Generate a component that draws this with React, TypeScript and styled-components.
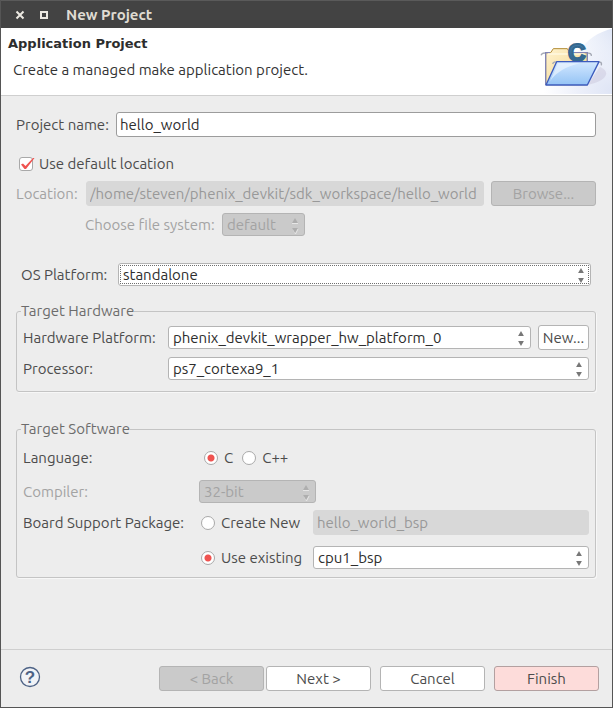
import React, { useId, useState } from "react";
import styled, { createGlobalStyle, css } from "styled-components";

const GlobalStyle = createGlobalStyle`
  *, *::before, *::after { box-sizing: border-box; }
  body {
    margin: 0;
    background: #ededed;
    color: #4c4c4c;
    font: 15px/20px Ubuntu, "Noto Sans", sans-serif;
  }
  button, input, select { font: inherit; color: inherit; margin: 0; }
`;

const ui = {
  line: "#b4b4b4",
  disabledFill: "#cacaca",
  disabledText: "#a3a3a3",
  accent: "#ef5350",
};

const Window = styled.main`
  display: flex;
  flex-direction: column;
  min-height: 100vh;
  border: 1px solid #555555;
  border-top: 0;
`;

const TitleBar = styled.header`
  display: flex;
  align-items: center;
  gap: 8px;
  height: 28px;
  padding: 0 11px;
  background: #434343;
  border-top: 1px solid #5a5a5a;
  color: #dfdbd2;
`;

const WindowButton = styled.button`
  display: flex;
  align-items: center;
  justify-content: center;
  width: 16px;
  height: 16px;
  padding: 0;
  border: 0;
  background: none;
`;

const WindowTitle = styled.h1`
  margin: 0 0 0 6px;
  font-size: 15px;
  line-height: 20px;
  font-weight: 700;
`;

const Banner = styled.section`
  display: flex;
  justify-content: space-between;
  height: 68px;
  background: #ffffff;
  border-bottom: 1px solid #cfcfcf;
`;

const BannerText = styled.div`
  padding: 6px 0 0 7px;
`;

const BannerTitle = styled.h2`
  margin: 0;
  color: #2d2d2d;
  font: 700 13px/20px "DejaVu Sans", sans-serif;
`;

const BannerNote = styled.p`
  margin: 6px 0 0 5px;
  color: #333333;
`;

const Body = styled.form`
  display: flex;
  flex: 1;
  flex-direction: column;
  padding: 16px 16px 16px 15px;
`;

const Row = styled.div<{ $top?: number; $indent?: number; $inset?: number }>`
  display: flex;
  align-items: center;
  gap: 7px;
  margin-top: ${(p) => p.$top ?? 0}px;
  padding-left: ${(p) => p.$indent ?? 0}px;
  padding-right: ${(p) => p.$inset ?? 0}px;
`;

const ChoiceGroup = styled.div`
  display: flex;
  gap: 9px;
`;

const Label = styled.label<{ $width?: number; $disabled?: boolean }>`
  flex: none;
  width: ${(p) => (p.$width ? `${p.$width}px` : "auto")};
  white-space: nowrap;
  color: ${(p) => (p.$disabled ? ui.disabledText : "inherit")};
`;

const TextBox = styled.input`
  flex: 1;
  min-width: 0;
  height: 25px;
  padding: 0 3px;
  border: 1px solid #9c9c9c;
  border-radius: 3px;
  outline: 0;
  background: #ffffff;
  color: #2d2d2d;
  &:disabled {
    border-color: #d8d8d8;
    background: #d8d8d8;
    color: #999999;
  }
`;

const PushButton = styled.button<{ $width: number; $primary?: boolean }>`
  flex: none;
  width: ${(p) => p.$width}px;
  height: 25px;
  padding: 0;
  border: 1px solid ${(p) => (p.$primary ? "#b3a0a0" : ui.line)};
  border-radius: 3px;
  background: ${(p) => (p.$primary ? "#fddcda" : "#ffffff")};
  line-height: 20px;
  &:disabled {
    background: ${ui.disabledFill};
    color: ${ui.disabledText};
  }
`;

const SelectFrame = styled.span<{ $width?: number; $focused?: boolean }>`
  position: relative;
  display: flex;
  ${(p) => (p.$width ? css`flex: none; width: ${p.$width}px;` : css`flex: 1; min-width: 0;`)}
  height: 23px;
  border: 1px solid ${ui.line};
  border-radius: 3px;
  background: #ffffff;
  color: #2d2d2d;
  &:has(select:disabled) {
    background: ${ui.disabledFill};
    color: ${ui.disabledText};
  }
  select {
    width: 100%;
    height: ${(p) => (p.$focused ? 19 : 21)}px;
    margin: ${(p) => (p.$focused ? 1 : 0)}px;
    padding: 0 20px 0 ${(p) => (p.$focused ? 2 : 4)}px;
    border: ${(p) => (p.$focused ? "1px dotted #6e6e6e" : "0")};
    outline: 0;
    appearance: none;
    background: none;
    line-height: 17px;
    opacity: 1;
  }
  svg {
    position: absolute;
    top: 3px;
    right: 5px;
    pointer-events: none;
  }
`;

const Group = styled.fieldset<{ $top: number; $pad: string }>`
  min-width: 0;
  margin: ${(p) => p.$top}px 0 0;
  padding: ${(p) => p.$pad};
  border: 1px solid #c4c4c4;
  border-radius: 3px;
  box-shadow: 1px 1px 0 #f7f7f7;
`;

const Legend = styled.legend`
  margin-left: -2px;
  padding: 0;
  color: #6c6c6c;
`;

const Choice = styled.label<{ $width?: number }>`
  display: flex;
  flex: none;
  align-items: center;
  gap: 6px;
  width: ${(p) => (p.$width ? `${p.$width}px` : "auto")};
  white-space: nowrap;
`;

const Radio = styled.input`
  flex: none;
  width: 14px;
  height: 14px;
  border: 1px solid #a9a9a9;
  border-radius: 50%;
  appearance: none;
  background: #ffffff;
  &:checked {
    background: radial-gradient(circle, ${ui.accent} 3px, #ffffff 4px);
  }
`;

const CheckFrame = styled.span`
  position: relative;
  display: flex;
  svg {
    position: absolute;
    top: 0;
    left: 0;
    pointer-events: none;
  }
`;

const Check = styled.input`
  width: 14px;
  height: 14px;
  border: 1px solid #a9a9a9;
  border-radius: 3px;
  appearance: none;
  background: #ffffff;
`;

const Footer = styled.footer`
  display: flex;
  align-items: center;
  gap: 9px;
  height: 58px;
  padding: 0 13px 0 18px;
  border-top: 1px solid #cfcfcf;
`;

const HelpButton = styled.button`
  display: flex;
  margin: 0 auto 3px 0;
  padding: 0;
  border: 0;
  background: none;
`;

const StepButtons = styled.div`
  display: flex;
  gap: 2px;
`;

function Arrows({ disabled }: { disabled?: boolean }) {
  return (
    <svg width="8" height="17" viewBox="0 0 8 17" aria-hidden="true">
      {disabled && <path d="M1 6.500h6M2.500 13 4.500 17 7 12" stroke="#e6e6e6" fill="none" />}
      <path d="M4 1 6.900 6H1.100Z" fill={disabled ? "#aeaeae" : "#777"} />
      <path d="M4 16 6.900 11H1.100Z" fill={disabled ? "#aeaeae" : "#777"} />
    </svg>
  );
}

type PickerProps = {
  id: string;
  value: string;
  width?: number;
  focused?: boolean;
  disabled?: boolean;
  label?: string;
};

function Picker({ id, value, width, focused, disabled, label }: PickerProps) {
  return (
    <SelectFrame $width={width} $focused={focused}>
      <select id={id} defaultValue={value} disabled={disabled} aria-label={label}>
        <option>{value}</option>
      </select>
      <Arrows disabled={disabled} />
    </SelectFrame>
  );
}

function ProjectArt() {
  return (
    <svg width="76" height="67" viewBox="108 24 228 201" aria-hidden="true">
      <defs>
        <radialGradient id="glow" cx="1" cy="0.95" r="0.9">
          <stop offset="0" stopColor="#dfe5f5" />
          <stop offset="0.5" stopColor="#edf0fa" />
          <stop offset="1" stopColor="#ffffff" />
        </radialGradient>
        <linearGradient id="swoosh" x1="0" y1="1" x2="1" y2="0">
          <stop offset="0" stopColor="#f4f7fd" stopOpacity="0" />
          <stop offset="1" stopColor="#dde4f5" />
        </linearGradient>
        <linearGradient id="paper" x1="0" y1="0" x2="1" y2="1">
          <stop offset="0" stopColor="#fff3cf" />
          <stop offset="1" stopColor="#f3d48a" />
        </linearGradient>
        <linearGradient id="flap" x1="0" y1="0" x2="0" y2="1">
          <stop offset="0" stopColor="#d3e8ff" />
          <stop offset="1" stopColor="#94c3f5" />
        </linearGradient>
        <linearGradient id="letter" x1="0" y1="0" x2="0" y2="1">
          <stop offset="0" stopColor="#4d82ad" />
          <stop offset="1" stopColor="#2c628f" />
        </linearGradient>
      </defs>
      <path d="M108 222V210C200 190 210 60 336 24V222Z" fill="url(#glow)" />
      <path d="M220 140C235 85 270 42 336 26V150C300 120 260 120 220 140Z" fill="url(#swoosh)" />
      <path d="M262 195 300 140C340 160 310 185 262 195Z" fill="#c4bfd4" opacity="0.4" />
      <path d="M123 106C126 98 132 98 138 100M262 100C270 98 275 102 274 108M298 127C305 126 306 132 303 136" fill="none" stroke="#a5a9b5" strokeWidth="4" />
      <path d="M137 194V98H152L160 86H202L209 98H262V194Z" fill="url(#paper)" stroke="#b18a31" strokeWidth="3" />
      <path d="M137 195V98H150M205 98H262V124" fill="none" stroke="#8285b5" strokeWidth="4" />
      <path d="M144 102H254" stroke="#fff8df" strokeWidth="4" />
      <text x="230" y="122" textAnchor="middle" fontFamily="Liberation Sans, sans-serif" fontWeight="700" fontSize="73" fill="url(#letter)" stroke="#35698f" strokeWidth="6">C</text>
      <path d="M158 132C160 125 165 125 171 127" fill="none" stroke="#a5a9b5" strokeWidth="4" />
      <path d="M170 125H297L262 195H138Z" fill="url(#flap)" stroke="#3c5bbd" strokeWidth="4" strokeLinejoin="round" />
      <path d="M174 130H240C200 140 170 155 150 184Z" fill="#f2f9ff" opacity="0.6" />
    </svg>
  );
}

export default function App() {
  const uid = useId();
  const [useDefault, setUseDefault] = useState(true);
  const id = (name: string) => `${uid}-${name}`;

  return (
    <>
      <GlobalStyle />
      <Window>
        <TitleBar>
          <WindowButton type="button" aria-label="Close">
            <svg width="10" height="10" viewBox="0 0 10 10">
              <path d="M1.500 1.500 8.500 8.500M8.500 1.500 1.500 8.500" stroke="#ece9e2" strokeWidth="2" />
            </svg>
          </WindowButton>
          <WindowButton type="button" aria-label="Maximize">
            <svg width="8" height="8" viewBox="0 0 8 8">
              <rect x="1" y="1" width="6" height="6" fill="none" stroke="#ece9e2" strokeWidth="2" />
            </svg>
          </WindowButton>
          <WindowTitle>New Project</WindowTitle>
        </TitleBar>

        <Banner>
          <BannerText>
            <BannerTitle>Application Project</BannerTitle>
            <BannerNote>Create a managed make application project.</BannerNote>
          </BannerText>
          <ProjectArt />
        </Banner>

        <Body id={id("form")} onSubmit={(e) => e.preventDefault()}>
          <Row>
            <Label htmlFor={id("name")} $width={93}>Project name:</Label>
            <TextBox id={id("name")} defaultValue="hello_world" />
          </Row>
          <Row $top={17} $indent={3}>
            <Choice>
              <CheckFrame>
                <Check
                  type="checkbox"
                  checked={useDefault}
                  onChange={(e) => setUseDefault(e.target.checked)}
                />
                {useDefault && (
                  <svg width="16" height="14" viewBox="0 0 16 14" aria-hidden="true">
                    <path d="M2 7.500 4 6.500 6.500 9 14 1H15.500L7 12H5.500Z" fill={ui.accent} />
                  </svg>
                )}
              </CheckFrame>
              Use default location
            </Choice>
          </Row>
          <Row $top={7}>
            <Label htmlFor={id("location")} $width={63} $disabled>Location:</Label>
            <TextBox
              id={id("location")}
              disabled
              defaultValue="/home/steven/phenix_devkit/sdk_workspace/hello_world"
            />
            <PushButton type="button" $width={105} disabled>Browse...</PushButton>
          </Row>
          <Row $top={7} $indent={69}>
            <Label htmlFor={id("fs")} $width={130} $disabled>Choose file system:</Label>
            <Picker id={id("fs")} value="default" width={83} disabled />
          </Row>
          <Row $top={27} $indent={5} $inset={5}>
            <Label htmlFor={id("os")} $width={90}>OS Platform:</Label>
            <Picker id={id("os")} value="standalone" focused />
          </Row>

          <Group $top={15} $pad="4px 6px 11px">
            <Legend>Target Hardware</Legend>
            <Row>
              <Label htmlFor={id("hw")} $width={138}>Hardware Platform:</Label>
              <Picker id={id("hw")} value="phenix_devkit_wrapper_hw_platform_0" />
              <PushButton type="button" $width={51}>New...</PushButton>
            </Row>
            <Row $top={7}>
              <Label htmlFor={id("cpu")} $width={138}>Processor:</Label>
              <Picker id={id("cpu")} value="ps7_cortexa9_1" />
            </Row>
          </Group>

          <Group $top={27} $pad="9px 6px 8px">
            <Legend>Target Software</Legend>
            <Row>
              <Label as="span" id={id("lang")} $width={174}>Language:</Label>
              <ChoiceGroup role="radiogroup" aria-labelledby={id("lang")}>
                <Choice>
                  <Radio type="radio" name="language" defaultChecked />
                  C
                </Choice>
                <Choice>
                  <Radio type="radio" name="language" />
                  C++
                </Choice>
              </ChoiceGroup>
            </Row>
            <Row $top={12}>
              <Label htmlFor={id("compiler")} $width={169} $disabled>Compiler:</Label>
              <Picker id={id("compiler")} value="32-bit" width={117} disabled />
            </Row>
            <Row $top={7}>
              <Label as="span" $width={171}>Board Support Package:</Label>
              <Choice $width={105}>
                <Radio type="radio" name="bsp" />
                Create New
              </Choice>
              <TextBox aria-label="New package name" disabled defaultValue="hello_world_bsp" />
            </Row>
            <Row $top={11} $indent={178}>
              <Choice $width={105}>
                <Radio type="radio" name="bsp" defaultChecked />
                Use existing
              </Choice>
              <Picker id={id("bsp")} label="Existing package" value="cpu1_bsp" />
            </Row>
          </Group>
        </Body>

        <Footer>
          <HelpButton type="button" aria-label="Help">
            <svg width="22" height="22" viewBox="0 0 22 22">
              <circle cx="11" cy="11" r="9.500" fill="#f1f3f7" stroke="#4d6285" strokeWidth="1.300" />
              <text x="11" y="17" textAnchor="middle" fontFamily="Liberation Sans, sans-serif" fontWeight="700" fontSize="17" fill="#4d6285">?</text>
            </svg>
          </HelpButton>
          <StepButtons>
            <PushButton type="button" $width={105} disabled>&lt; Back</PushButton>
            <PushButton type="button" $width={105}>Next &gt;</PushButton>
          </StepButtons>
          <PushButton type="button" $width={105}>Cancel</PushButton>
          <PushButton type="submit" form={id("form")} $width={105} $primary>Finish</PushButton>
        </Footer>
      </Window>
    </>
  );
}
